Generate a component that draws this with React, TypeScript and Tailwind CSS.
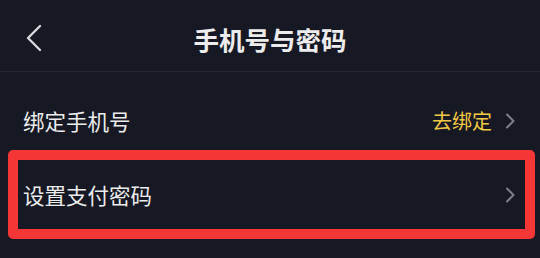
import React from "react";

const Chevron = ({ className }: { className?: string }) => (
  <svg width="10" height="16" viewBox="0 0 10 16" className={className} fill="none">
    <path d="M2 1.5 L8.5 8 L2 14.5" stroke="#7d7f86" strokeWidth="2" strokeLinecap="round" strokeLinejoin="round" />
  </svg>
);

export default function App() {
  return (
    <div
      className="w-[540px] h-[258px] bg-[#161823] overflow-hidden text-[#ececed]"
      style={{ fontFamily: '"Noto Sans CJK SC", "Noto Sans", sans-serif' }}
    >
      <div className="relative h-[71px] flex items-center justify-center border-b border-[#23252f] box-content">
        <svg
          width="18"
          height="28"
          viewBox="0 0 18 28"
          fill="none"
          className="absolute left-[25px] top-[24px]"
        >
          <path d="M15 2 L3 14 L15 26" stroke="#d9d9db" strokeWidth="2.4" strokeLinecap="round" strokeLinejoin="round" />
        </svg>
        <span className="text-[25.5px] font-bold leading-none mt-[7px] tracking-[0px]">手机号与密码</span>
      </div>
      <div className="pt-[12px]">
        <div className="h-[74px] flex items-center justify-between pl-[23px] pr-[25px]">
          <span className="text-[21.5px] leading-none">绑定手机号</span>
          <div className="flex items-center gap-[13px]">
            <span className="text-[20px] leading-none text-[#f2c945]">去绑定</span>
            <Chevron />
          </div>
        </div>
        <div className="relative h-[74px] flex items-center justify-between pl-[23px] pr-[25px]">
          <span className="text-[21.5px] leading-none">设置支付密码</span>
          <Chevron />
          <div className="absolute left-[8px] right-[5px] top-[-8px] bottom-[-7px] border-[10px] border-[#f43636] rounded-[5px]" />
        </div>
      </div>
    </div>
  );
}
